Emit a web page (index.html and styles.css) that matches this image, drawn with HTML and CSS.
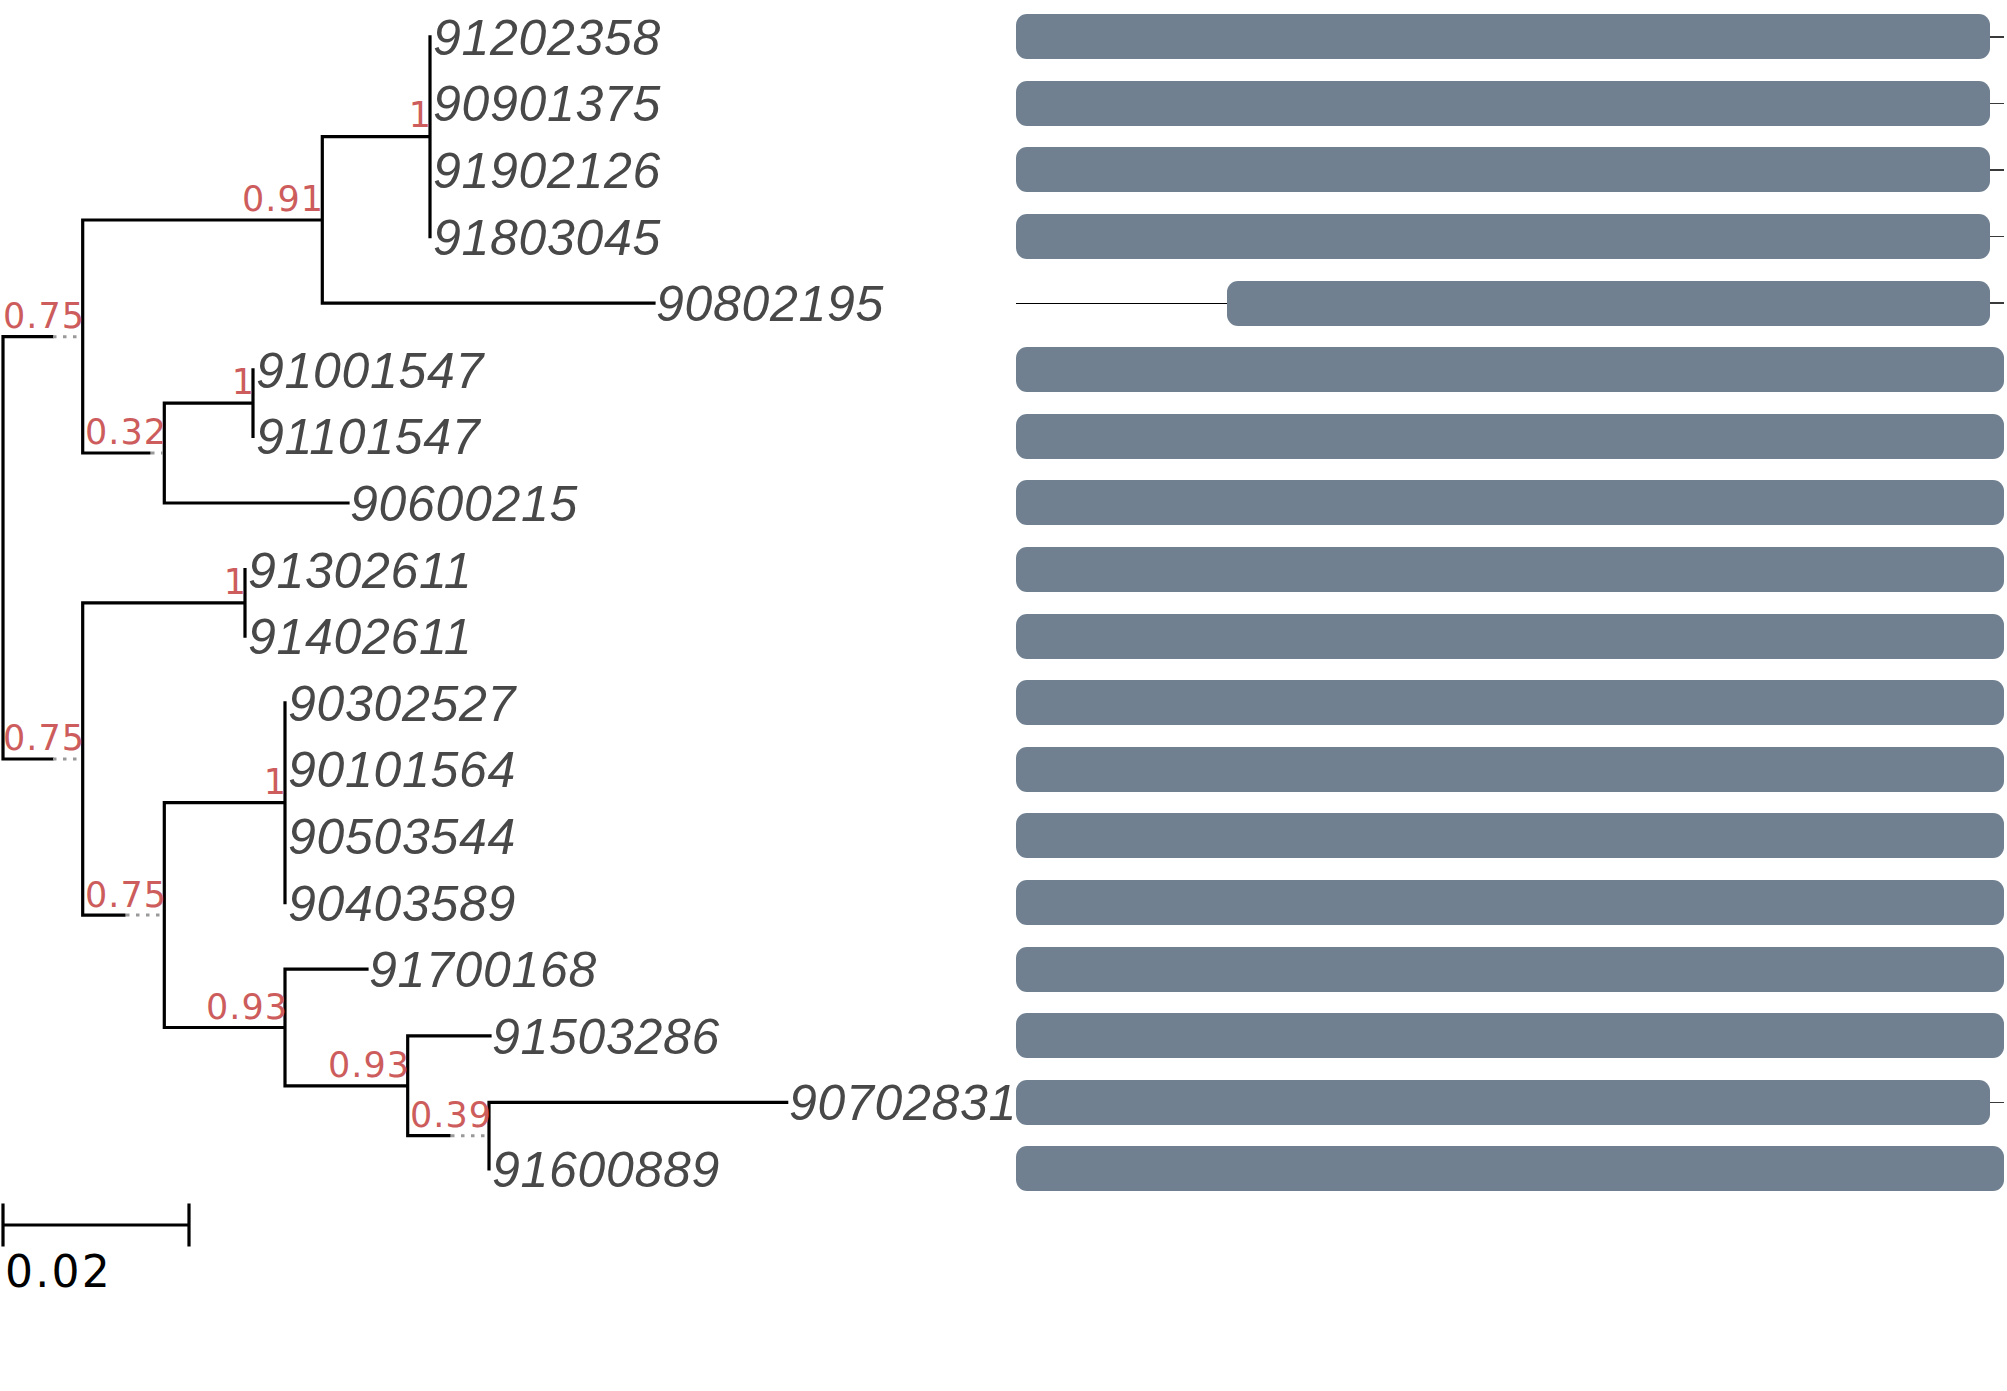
FILE: index.html
```html
<!DOCTYPE html>
<html lang="en">
<head>
<meta charset="utf-8">
<title>Phylogenetic tree</title>
<link rel="stylesheet" href="styles.css">
</head>
<body>
<div class="plot">
  <svg class="tree" viewBox="0 0 1016 1391" width="1016" height="1391" xmlns="http://www.w3.org/2000/svg">
    <path class="br" d="M3 336.7V759 M3 336.7H52 M3 759H52
      M82.7 220V453 M82.7 220H322.3 M82.7 453H149
      M322.3 136.7V303.2 M322.3 136.7H430 M322.3 303.2H654 M430 36.8V236.6
      M164.3 403.1V503 M164.3 403.1H253 M164.3 503H348 M253 369.8V436.4
      M82.7 602.9V915.1 M82.7 602.9H245 M82.7 915.1H124 M245 569.6V636.2
      M164.3 802.7V1027.5 M164.3 802.7H285 M164.3 1027.5H285 M285 702.8V902.6
      M285 969.2V1085.8 M285 969.2H367 M285 1085.8H407.7
      M407.7 1035.8V1135.7 M407.7 1035.8H490 M407.7 1135.7H449
      M489 1102.4V1169 M489 1102.4H786.7"/>
    <path class="dot" d="M53 336.7H82 M53 759H82 M151 453H163 M126 915.1H163 M451 1135.7H488"/>

    <g class="tips">
      <text x="433" y="54.7">91202358</text>
      <text x="433" y="121.3">90901375</text>
      <text x="433" y="187.9">91902126</text>
      <text x="433" y="254.5">91803045</text>
      <text x="656" y="321.1">90802195</text>
      <text x="256" y="387.7">91001547</text>
      <text x="256" y="454.3">91101547</text>
      <text x="350" y="520.9">90600215</text>
      <text x="248" y="587.5">91302611</text>
      <text x="248" y="654.1">91402611</text>
      <text x="288" y="720.7">90302527</text>
      <text x="288" y="787.3">90101564</text>
      <text x="288" y="853.9">90503544</text>
      <text x="288" y="920.5">90403589</text>
      <text x="369" y="987.1">91700168</text>
      <text x="492" y="1053.7">91503286</text>
      <text x="789" y="1120.3">90702831</text>
      <text x="492" y="1186.9">91600889</text>
    </g>

    <g class="sup">
      <text x="432" y="127.2">1</text>
      <text x="324" y="210.5">0.91</text>
      <text x="85" y="327.5">0.75</text>
      <text x="167" y="444">0.32</text>
      <text x="255" y="393.5">1</text>
      <text x="247" y="593.5">1</text>
      <text x="85" y="749.5">0.75</text>
      <text x="287" y="793.5">1</text>
      <text x="167" y="906.5">0.75</text>
      <text x="288" y="1018.5">0.93</text>
      <text x="410" y="1077">0.93</text>
      <text x="492" y="1127.2">0.39</text>
    </g>

    <path class="br" d="M3 1225H189 M3 1205V1245 M189 1205V1245"/>
    <text class="scale" x="5" y="1287">0.02</text>
  </svg>

  <div class="bars">
    <div class="row"><div class="bar short"></div><div class="tail"></div></div>
    <div class="row"><div class="bar short"></div><div class="tail"></div></div>
    <div class="row"><div class="bar short"></div><div class="tail"></div></div>
    <div class="row"><div class="bar short"></div><div class="tail"></div></div>
    <div class="row"><div class="lead"></div><div class="bar late"></div><div class="tail"></div></div>
    <div class="row"><div class="bar full"></div></div>
    <div class="row"><div class="bar full"></div></div>
    <div class="row"><div class="bar full"></div></div>
    <div class="row"><div class="bar full"></div></div>
    <div class="row"><div class="bar full"></div></div>
    <div class="row"><div class="bar full"></div></div>
    <div class="row"><div class="bar full"></div></div>
    <div class="row"><div class="bar full"></div></div>
    <div class="row"><div class="bar full"></div></div>
    <div class="row"><div class="bar full"></div></div>
    <div class="row"><div class="bar full"></div></div>
    <div class="row"><div class="bar short"></div><div class="tail"></div></div>
    <div class="row"><div class="bar full"></div></div>
  </div>
</div>
</body>
</html>
```

FILE: styles.css
```css
html, body {
  margin: 0;
  padding: 0;
  background: #ffffff;
}

.plot {
  display: flex;
  width: 2007px;
  height: 1391px;
  overflow: hidden;
}

.tree {
  flex: 0 0 1015.7px;
  display: block;
  overflow: visible;
}

.br {
  fill: none;
  stroke: #000000;
  stroke-width: 3.2;
  stroke-linecap: square;
}

.dot {
  fill: none;
  stroke: #9a9a9a;
  stroke-width: 3;
  stroke-linecap: butt;
  stroke-dasharray: 3.5 6.5;
}

.tips text {
  font-family: "Liberation Sans", Arial, sans-serif;
  font-style: italic;
  font-size: 50px;
  letter-spacing: 0.7px;
  fill: #484848;
}

.sup text {
  font-family: "DejaVu Sans", sans-serif;
  font-size: 35px;
  letter-spacing: 1px;
  fill: #cd5c5c;
  text-anchor: end;
}

.scale {
  font-family: "DejaVu Sans", sans-serif;
  font-size: 44px;
  letter-spacing: 2.3px;
  fill: #000000;
}

.bars {
  flex: 1;
  display: flex;
  flex-direction: column;
  gap: 21.6px;
  padding: 14.3px 2.7px 0 0;
}

.row {
  display: flex;
  align-items: center;
  height: 45px;
}

.bar {
  height: 45px;
  background: #708090;
  border-radius: 11px;
  box-sizing: border-box;
}

.bar.full {
  flex: 1;
}

.bar.short {
  flex: 0 0 974.3px;
}

.bar.late {
  flex: 0 0 763.3px;
}

.lead {
  flex: 0 0 211px;
  height: 1px;
  background: #000000;
}

.tail {
  flex: 1;
  height: 1.5px;
  background: #3a3a3a;
}
```
